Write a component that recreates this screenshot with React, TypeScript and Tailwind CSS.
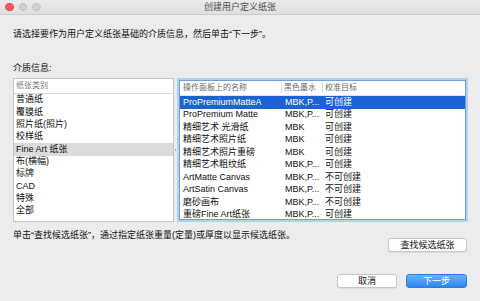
import React from "react";

const categories = ["普通纸", "覆膜纸", "照片纸(照片)", "校样纸", "Fine Art 纸张", "布(横幅)", "标牌", "CAD", "特殊", "全部"];

type Row = { name: string; ink: string; target: string };

const rows: Row[] = [
  { name: "ProPremiumMatteA", ink: "MBK,P...", target: "可创建" },
  { name: "ProPremium Matte", ink: "MBK,P...", target: "可创建" },
  { name: "精细艺术 光滑纸", ink: "MBK", target: "可创建" },
  { name: "精细艺术照片纸", ink: "MBK", target: "可创建" },
  { name: "精细艺术照片重磅", ink: "MBK", target: "可创建" },
  { name: "精细艺术粗纹纸", ink: "MBK,P...", target: "可创建" },
  { name: "ArtMatte Canvas", ink: "MBK,P...", target: "不可创建" },
  { name: "ArtSatin Canvas", ink: "MBK,P...", target: "不可创建" },
  { name: "磨砂画布", ink: "MBK,P...", target: "不可创建" },
  { name: "重磅Fine Art纸张", ink: "MBK,P...", target: "可创建" },
];

export default function App() {
  return (
    <div className="w-[480px] h-[301px] overflow-hidden bg-[#ececec] flex flex-col text-[9px] text-[#111] font-['Liberation_Sans','Noto_Sans_CJK_SC',sans-serif]">
      {/* title bar */}
      <div className="h-[15px] shrink-0 grid grid-cols-[1fr_auto_1fr] items-center bg-gradient-to-b from-[#ebebeb] to-[#dedede] border-b border-[#cdcdcd]">
        <div className="flex items-center gap-[5px] pl-[5px]">
          <span className="w-[8.5px] h-[8.5px] rounded-full bg-[#fc605c] border border-[#e0443e]" />
          <span className="w-[8.5px] h-[8.5px] rounded-full bg-[#d0d0d0] border border-[#c2c2c2]" />
          <span className="w-[8.5px] h-[8.5px] rounded-full bg-[#d0d0d0] border border-[#c2c2c2]" />
        </div>
        <div className="text-[#4d4d4d] leading-[14px]">创建用户定义纸张</div>
        <div />
      </div>

      <div className="flex flex-col pl-[13px] pr-[12px]">
        <p className="mt-[13px] leading-[12px]">请选择要作为用户定义纸张基础的介质信息，然后单击“下一步”。</p>
        <p className="mt-[22px] leading-[12px]">介质信息:</p>

        <div className="mt-[4px] h-[144px] flex">
          {/* category list */}
          <div className="w-[161px] bg-white border border-[#c4c4c4] flex flex-col">
            <div className="h-[15px] shrink-0 flex items-center pl-[2px] text-[8px] text-[#777] border-b border-[#dadada]">纸张类别</div>
            {categories.map((c, i) => (
              <div
                key={c}
                className={
                  i === 4
                    ? "h-[12.33px] flex items-center pl-[2px] bg-[#dcdcdc]"
                    : "h-[12.33px] flex items-center pl-[2px]"
                }
              >
                {c}
              </div>
            ))}
          </div>

          {/* splitter */}
          <div className="w-[3px] flex items-center justify-center">
            <span className="w-[1.5px] h-[1.5px] rounded-full bg-[#9a9a9a]" />
          </div>

          {/* media table */}
          <div className="flex-1 p-[2px]">
            <div className="h-full bg-white border border-[#6d9fe0] shadow-[0_0_0_2px_#b3cff2] flex flex-col">
              <div className="h-[15px] shrink-0 flex items-center text-[8px] text-[#6b6b6b] border-b border-[#e2e2e2]">
                <div className="w-[102px] pl-[3px] border-r border-[#d8d8d8] h-[10px] flex items-center">操作面板上的名称</div>
                <div className="w-[41px] pl-[2px] border-r border-[#d8d8d8] h-[10px] flex items-center">黑色墨水</div>
                <div className="pl-[2px]">校准目标</div>
              </div>
              {rows.map((r, i) => (
                <div
                  key={r.name}
                  className={
                    i === 0
                      ? "h-[12.5px] flex items-center bg-[#1b63d3] text-white"
                      : "h-[12.5px] flex items-center"
                  }
                >
                  <div className="w-[102px] pl-[3px] whitespace-nowrap">{r.name}</div>
                  <div className="w-[41px] pl-[3px] whitespace-nowrap">{r.ink}</div>
                  <div className="pl-[2px] whitespace-nowrap">{r.target}</div>
                </div>
              ))}
            </div>
          </div>
        </div>

        <p className="mt-[8px] leading-[10px]">单击“查找候选纸张”，通过指定纸张重量(定量)或厚度以显示候选纸张。</p>
        <div className="mt-[-2px] flex justify-end pr-[1px]">
          <button className="w-[79px] h-[14px] rounded-[3px] bg-white border border-[#c6c6c6] shadow-[0_0.5px_0.5px_rgba(0,0,0,0.12)] leading-[12px]">
            查找候选纸张
          </button>
        </div>

        <div className="mt-[22px] flex justify-end gap-[9px] pr-[1px]">
          <button className="w-[60px] h-[14px] rounded-[3px] bg-white border border-[#c6c6c6] shadow-[0_0.5px_0.5px_rgba(0,0,0,0.12)] leading-[12px]">
            取消
          </button>
          <button className="w-[61px] h-[14px] rounded-[3px] bg-gradient-to-b from-[#6ab2fb] to-[#2e84f0] border border-[#2a7de8] text-white leading-[12px]">
            下一步
          </button>
        </div>
      </div>
    </div>
  );
}
